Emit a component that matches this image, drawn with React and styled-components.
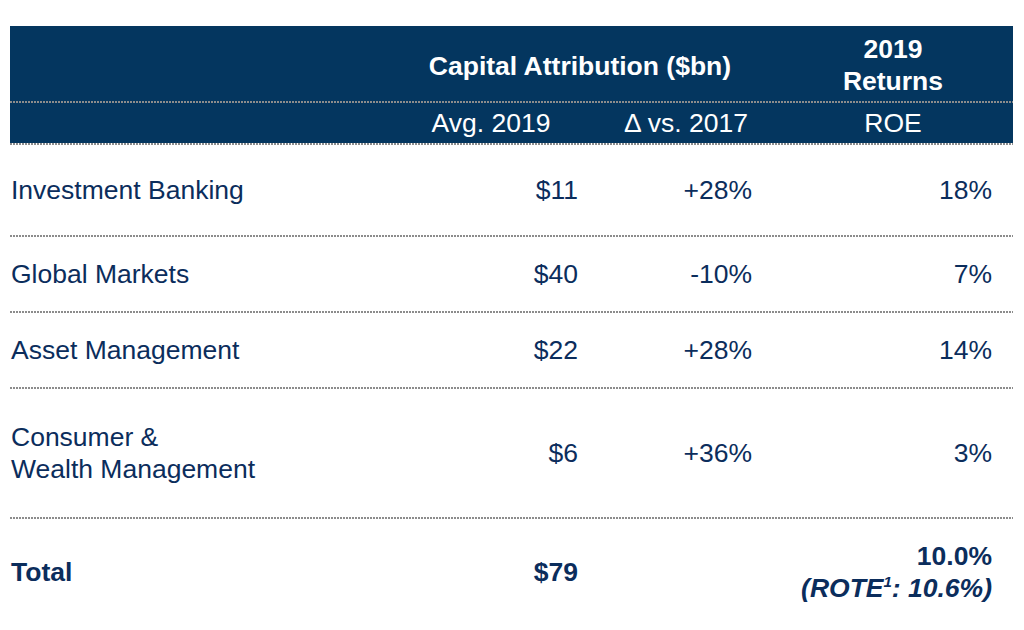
import React from "react";
import styled, { createGlobalStyle } from "styled-components";

const NAVY = "#04365f";
const INK = "#0b2d5c";

const rows = [
  { label: ["Investment Banking"], avg: "$11", delta: "+28%", roe: "18%", h: 90 },
  { label: ["Global Markets"], avg: "$40", delta: "-10%", roe: "7%", h: 74 },
  { label: ["Asset Management"], avg: "$22", delta: "+28%", roe: "14%", h: 74 },
  { label: ["Consumer &", "Wealth Management"], avg: "$6", delta: "+36%", roe: "3%", h: 128 },
];

class App extends React.Component {
  render() {
    return (
      <Page>
        <GlobalStyle />
        <Header>
          <Row h={75}>
            <Cell />
            <Cell span={2} pr={30} pt={5}>
              Capital Attribution ($bn)
            </Cell>
            <Cell pr={17} pt={2}>
              <Lines align="center">
                <span>2019</span>
                <span>Returns</span>
              </Lines>
            </Cell>
          </Row>
          <DotLine />
          <SubRow h={40}>
            <Cell />
            <Cell pr={18}>Avg. 2019</Cell>
            <Cell pr={18}>Δ vs. 2017</Cell>
            <Cell pr={17}>ROE</Cell>
          </SubRow>
        </Header>
        <DotLine />
        {rows.map((r) => (
          <React.Fragment key={r.label[0]}>
            <BodyRow h={r.h}>
              <Label>
                <Lines align="flex-start">
                  {r.label.map((l) => (
                    <span key={l}>{l}</span>
                  ))}
                </Lines>
              </Label>
              <Value pr={22}>{r.avg}</Value>
              <Value pr={38}>{r.delta}</Value>
              <Value pr={21}>{r.roe}</Value>
            </BodyRow>
            <DotLine />
          </React.Fragment>
        ))}
        <TotalRow h={106}>
          <Label>Total</Label>
          <Value pr={22}>$79</Value>
          <Value pr={38} />
          <Value pr={21}>
            <Lines align="flex-end">
              <span>10.0%</span>
              <Rote>
                (ROTE<sup>1</sup>: 10.6%)
              </Rote>
            </Lines>
          </Value>
        </TotalRow>
      </Page>
    );
  }
}

const GlobalStyle = createGlobalStyle`
  html, body {
    margin: 0;
    padding: 0;
    background: #ffffff;
  }
  body {
    font-family: "Liberation Sans", Arial, sans-serif;
  }
`;

const Page = styled.div`
  width: 1024px;
  height: 630px;
  box-sizing: border-box;
  padding: 26px 11px 0 10px;
  overflow: hidden;
`;

const Header = styled.div`
  background: ${NAVY};
  color: #ffffff;
`;

const Row = styled.div`
  display: grid;
  grid-template-columns: 390px 200px 190px 1fr;
  height: ${(p) => p.h}px;
  font-size: 26.5px;
  font-weight: bold;
`;

const SubRow = styled(Row)`
  font-weight: normal;
`;

const Cell = styled.div`
  grid-column: span ${(p) => p.span || 1};
  display: flex;
  align-items: center;
  justify-content: center;
  padding-right: ${(p) => p.pr || 0}px;
  padding-top: ${(p) => p.pt || 0}px;
  text-align: center;
`;

const Lines = styled.div`
  display: flex;
  flex-direction: column;
  align-items: ${(p) => p.align};
  line-height: 32px;
`;

const DotLine = styled.div`
  height: 2px;
  background-image: repeating-linear-gradient(
    to right,
    #8c8c8c 0 2px,
    transparent 2px 3px
  );
`;

const BodyRow = styled.div`
  display: grid;
  grid-template-columns: 390px 200px 190px 1fr;
  height: ${(p) => p.h}px;
  font-size: 26.5px;
  color: ${INK};
`;

const TotalRow = styled(BodyRow)`
  font-weight: bold;
`;

const Label = styled.div`
  display: flex;
  align-items: center;
  padding-left: 1px;
`;

const Value = styled.div`
  display: flex;
  align-items: center;
  justify-content: flex-end;
  padding-right: ${(p) => p.pr}px;
`;

const Rote = styled.span`
  font-style: italic;
  sup {
    font-size: 15px;
    line-height: 0;
    vertical-align: 10px;
  }
`;

export default App;
